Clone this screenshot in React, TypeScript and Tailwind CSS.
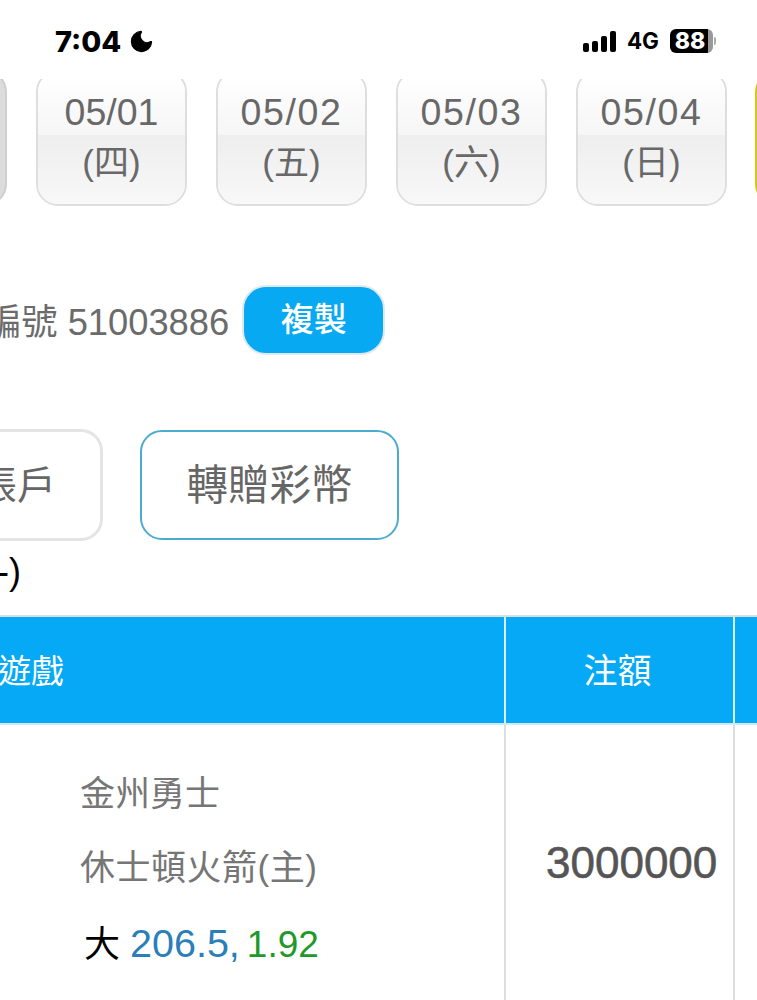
import React from 'react';
import { Moon } from 'lucide-react';

const FONT = "font-['Liberation_Sans','Noto_Sans_CJK_TC',sans-serif]";

const DATES = [
  { date: '05/01', day: '四', spacing: 'tracking-normal' },
  { date: '05/02', day: '五', spacing: 'tracking-[1.6px]' },
  { date: '05/03', day: '六', spacing: 'tracking-[1.6px]' },
  { date: '05/04', day: '日', spacing: 'tracking-[1.6px]' },
];

const DateCard: React.FC<{ date: string; day: string; spacing: string }> = ({ date, day, spacing }) => (
  <div className="w-[151px] h-[136px] shrink-0 rounded-[22px] border-2 border-[#dedede] overflow-hidden flex flex-col text-[#686868]">
    <div className={`h-[63px] pb-[3px] flex items-end justify-center bg-gradient-to-b from-white to-[#f6f6f6] text-[37.5px] leading-[40px] ${spacing}`}>
      {date}
    </div>
    <div className="flex-1 pt-[8px] flex justify-center bg-gradient-to-b from-[#eeeeee] to-[#f8f8f8] text-[35px] leading-[40px]">
      ({day})
    </div>
  </div>
);

export default function App() {
  return (
    <div className={`w-[757px] h-[1000px] overflow-hidden bg-white ${FONT}`}>
      {/* Status bar */}
      <div className="h-[79px] pl-[55px] pr-[41px] pt-[3px] flex items-center justify-between text-black">
        <div className="flex items-center gap-[7px]">
          <span className="font-['Inter'] font-extrabold text-[29px] leading-none">7:04</span>
          <Moon size={27} fill="currentColor" strokeWidth={1} />
        </div>
        <div className="flex items-center gap-[11px]">
          <div className="flex items-end gap-[3px]">
            <span className="w-[6px] h-[9px] rounded-[2px] bg-black" />
            <span className="w-[6px] h-[11px] rounded-[2px] bg-black" />
            <span className="w-[6px] h-[16px] rounded-[2px] bg-black" />
            <span className="w-[6px] h-[21px] rounded-[2px] bg-black" />
          </div>
          <span className="font-['Inter'] font-bold text-[22.5px] leading-none">4G</span>
          <div className="flex items-center gap-[1px]">
            <div className="w-[43px] h-[24px] rounded-[6px] bg-[linear-gradient(90deg,#000_88%,#999_88%)] flex items-center justify-center">
              <span className="font-['Inter'] font-extrabold text-[23px] leading-none text-white mr-[3px]">88</span>
            </div>
            <span className="w-[2px] h-[8px] rounded-r bg-[#aaa]" />
          </div>
        </div>
      </div>

      {/* Date strip */}
      <div className="h-[127px] overflow-hidden">
        <div className="flex gap-[29px] ml-[-144px] -mt-[9px]">
          <div className="w-[151px] h-[136px] shrink-0 rounded-[22px] border-2 border-[#cfcfcf] bg-[#dcdcdc]" />
          {DATES.map((d) => (
            <DateCard key={d.date} date={d.date} day={d.day} spacing={d.spacing} />
          ))}
          <div className="w-[151px] h-[136px] shrink-0 -ml-[1px] rounded-[22px] border-[3px] border-[#d9c31a] bg-white" />
        </div>
      </div>

      {/* Order number */}
      <div className="mt-[79px] ml-[-15px] flex items-center gap-[13px]">
        <span className="pt-[6px] text-[36.3px] leading-[40px] text-[#6b6b6b] whitespace-nowrap">編號 51003886</span>
        <button className="w-[143px] h-[70px] rounded-[24px] border-2 border-[#dfe9f0] bg-[#08a9f3] text-white text-[33px] font-medium">
          複製
        </button>
      </div>

      {/* Actions */}
      <div className="mt-[74px] ml-[-101px] flex items-center gap-[37px]">
        <div className="w-[204px] h-[112px] pt-[3px] rounded-[22px] border-[3px] border-[#e4e4e4] flex items-center justify-end pr-[44px] text-[39px] text-[#666]">
          帳戶
        </div>
        <div className="w-[259px] h-[110px] pt-[3px] rounded-[22px] border-2 border-[#4bacd0] flex items-center justify-center text-[41.5px] text-[#666]">
          轉贈彩幣
        </div>
      </div>
      <div className="h-[74px] pt-[11px] ml-[-3px] text-[36px] leading-[40px] text-black">-)</div>

      {/* Bet table */}
      <div className="border-t-2 border-[#dddddd]">
        <div className="h-[108px] flex bg-[#05a9f5] border-b-2 border-[#cfe9f5] text-white text-[33px]">
          <div className="w-[506px] shrink-0 pt-[3px] border-r-2 border-[#d8eef8] flex items-center">
            <span className="ml-[-2px]">遊戲</span>
          </div>
          <div className="w-[229px] shrink-0 pt-[3px] border-r-2 border-[#d8eef8] flex items-center justify-center">
            <span className="mr-[4px] text-[34px]">注額</span>
          </div>
        </div>
        <div className="flex h-[280px]">
          <div className="w-[506px] shrink-0 border-r-2 border-[#dddddd] pl-[80px] pt-[32px] text-[35px] text-[#767676]">
            <div className="h-[74px] leading-[74px]">金州勇士</div>
            <div className="h-[74px] leading-[74px] tracking-[0.5px]">休士頓火箭(主)</div>
            <div className="h-[74px] leading-[76px] text-black whitespace-nowrap">
              <span className="ml-[4px] text-[36px]">大</span>
              <span className="ml-[10px] text-[39.5px] text-[#2a7fb8]">206.5,</span>
              <span className="ml-[7px] text-[37px] text-[#1f9a2a]">1.92</span>
            </div>
          </div>
          <div className="w-[229px] shrink-0 border-r-2 border-[#dddddd] pt-[113px] pl-[40px]">
            <span className="text-[44px] leading-[50px] text-[#555] [-webkit-text-stroke:0.6px_#555]">3000000</span>
          </div>
        </div>
      </div>
    </div>
  );
}
